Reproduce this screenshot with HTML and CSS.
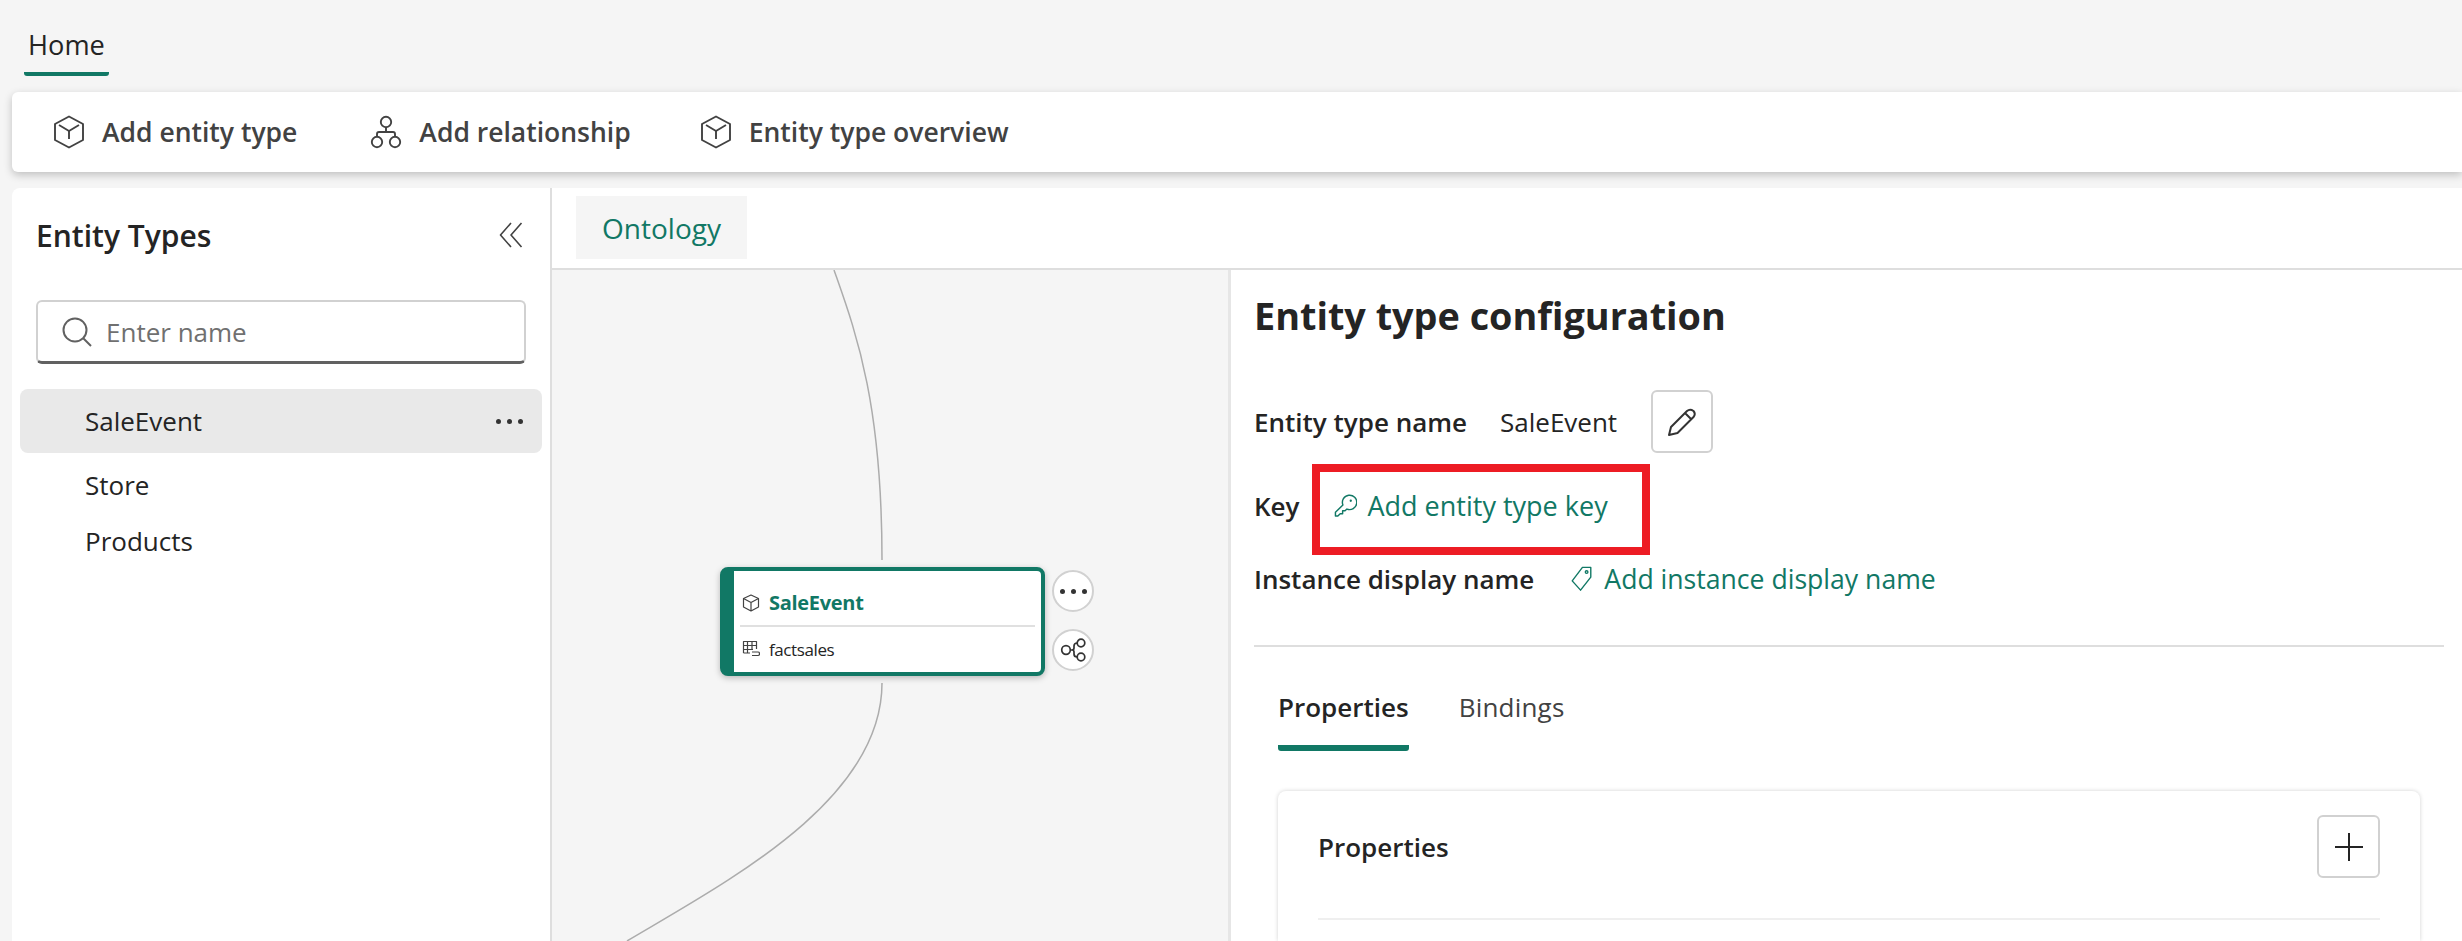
FILE: index.html
```html
<!DOCTYPE html>
<html lang="en">
<head>
<meta charset="utf-8">
<title>Ontology</title>
<link rel="stylesheet" href="styles.css">
</head>
<body>
<header class="top">
  <div class="home-tab">Home</div>
</header>
<nav class="toolbar">
  <button class="tool tool-add">
    <svg class="tool-icon" viewBox="0 0 34 34"><path d="M17 1.500 L31 9 V25 L17 32.500 L3 25 V9 Z M7 10 L17 16 L27 10 M17 16 V24"/></svg>
    <span>Add entity type</span>
  </button>
  <button class="tool tool-rel">
    <svg class="tool-icon" viewBox="0 0 34 34"><circle cx="17" cy="7" r="5.200"/><circle cx="8" cy="27" r="5.200"/><circle cx="26" cy="27" r="5.200"/><path d="M17 12 V17 M8 22 V19 Q8 17 10 17 H24 Q26 17 26 19 V22"/></svg>
    <span>Add relationship</span>
  </button>
  <button class="tool">
    <svg class="tool-icon" viewBox="0 0 34 34"><path d="M17 1.500 L31 9 V25 L17 32.500 L3 25 V9 Z M7 10 L17 16 L27 10 M17 16 V24"/></svg>
    <span>Entity type overview</span>
  </button>
</nav>
<main class="workspace">
  <aside class="side">
    <div class="side-head">
      <h2 class="side-title">Entity Types</h2>
      <svg class="collapse" viewBox="0 0 24 26"><path d="M12 1 L1.500 13 L12 25 M22.500 1 L12 13 L22.500 25"/></svg>
    </div>
    <div class="search">
      <svg class="search-icon" viewBox="0 0 30 30"><circle cx="13" cy="13" r="11.500"/><path d="M21 21 L29 29"/></svg>
      <span class="placeholder">Enter name</span>
    </div>
    <ul class="list">
      <li class="item item-active"><span>SaleEvent</span><span class="dots"><i></i><i></i><i></i></span></li>
      <li class="item item-store">Store</li>
      <li class="item item-products">Products</li>
    </ul>
  </aside>
  <section class="content">
    <div class="tabstrip"><div class="doc-tab">Ontology</div></div>
    <div class="split">
      <div class="canvas">
        <svg class="edges" viewBox="0 0 675 671">
          <path d="M282 0 C 303 60 330 130 330 290"/>
          <path d="M330 413 C 330 530 178 610 75 671"/>
        </svg>
        <div class="node">
          <div class="node-title">
            <svg class="node-icon" viewBox="0 0 18 18"><path d="M9 1 L16.500 4.500 V13 L9 17 L1.500 13 V4.500 Z M2 4.800 L9 8.500 L16 4.800 M9 8.500 V17"/></svg>
            <span>SaleEvent</span>
          </div>
          <div class="node-sub">
            <svg class="node-icon" viewBox="0 0 18 18"><path d="M1.500 13 V1.500 H14.500 V9 M1.500 5.500 H14.500 M1.500 9.500 H11 M5.500 1.500 V13 M10 1.500 V9 M1.500 13 H8 M10 12 H12 M10 15.500 H16.500 M10 12 H16 Q17.500 12 17.500 13.700 Q17.500 15.500 16 15.500"/></svg>
            <span>factsales</span>
          </div>
        </div>
        <div class="node-btn node-btn-more"><span class="dots"><i></i><i></i><i></i></span></div>
        <div class="node-btn node-btn-rel">
          <svg class="rel-icon" viewBox="0 0 26 24"><circle cx="6" cy="12" r="4.300"/><circle cx="21" cy="5" r="3.800"/><circle cx="21" cy="19" r="3.800"/><path d="M10.300 12 H12 Q14 12 14 10 V8 Q14 5 17.200 5 M12 12 Q14 12 14 14 V16 Q14 19 17.200 19"/></svg>
        </div>
      </div>
      <div class="config">
        <h1 class="config-title">Entity type configuration</h1>
        <div class="field field-name">
          <span class="label">Entity type name</span>
          <span class="value">SaleEvent</span>
          <button class="square-btn">
            <svg class="pencil" viewBox="0 0 30 30"><path d="M2 28 L4 20 L20 4 Q23 1.500 26.500 4 Q29 7 26.500 10 L10.500 26 Z M18 6 L24.500 12.500"/></svg>
          </button>
        </div>
        <div class="field field-key">
          <span class="label">Key</span>
          <a class="add-link add-link-key">
            <svg class="link-icon" viewBox="0 0 24 24"><path d="M9.300 11 A7.500 7.500 0 1 1 13.500 15.200 L11.500 17 H9 V20 H6.500 L4 22.500 H1.500 V18.500 Z"/><circle class="key-hole" cx="17.500" cy="6.500" r="1.200"/></svg>
            <span>Add entity type key</span>
          </a>
        </div>
        <div class="field field-instance">
          <span class="label">Instance display name</span>
          <a class="add-link add-link-instance">
            <svg class="link-icon" viewBox="0 0 24 28"><path d="M13 1.500 H22 V12 L11 26 L2 16 Z"/><circle cx="17.500" cy="6.500" r="1.400"/></svg>
            <span>Add instance display name</span>
          </a>
        </div>
        <hr class="rule">
        <div class="subtabs">
          <div class="subtab subtab-active">Properties</div>
          <div class="subtab">Bindings</div>
        </div>
        <div class="card">
          <div class="card-head">
            <span class="label">Properties</span>
            <button class="square-btn">
              <svg class="plus" viewBox="0 0 30 30"><path d="M15 1 V29 M1 15 H29"/></svg>
            </button>
          </div>
          <hr class="card-rule">
        </div>
      </div>
    </div>
  </section>
  <div class="callout"></div>
</main>
</body>
</html>
```
FILE: styles.css
```css
* { box-sizing: border-box; }
html, body { margin: 0; height: 100%; }
body {
  width: 2462px;
  height: 941px;
  overflow: hidden;
  background: #f5f5f5;
  font-family: "Open Sans", "Noto Sans", sans-serif;
  font-size: 26px;
  color: #242424;
  display: flex;
  flex-direction: column;
}
svg { fill: none; stroke: currentColor; stroke-width: 2; stroke-linejoin: round; display: block; flex: none; }
button { font: inherit; color: inherit; background: none; border: 0; padding: 0; }

.top { height: 92px; padding: 24px 0 0 24px; flex: none; }
.home-tab {
  display: inline-block;
  padding: 0 4px;
  height: 52px;
  line-height: 41px;
  font-size: 27.200px;
  font-weight: 500;
  border-bottom: 4px solid #117865;
  border-radius: 0 0 3px 3px;
}

.toolbar {
  height: 80px;
  margin: 0 0 16px 12px;
  background: #fff;
  border-radius: 6px 0 0 6px;
  box-shadow: 0 3px 8px rgba(0,0,0,.22);
  display: flex;
  align-items: center;
  padding-left: 40px;
  flex: none;
}
.tool { display: flex; align-items: center; gap: 16px; font-weight: 600; color: #424242; font-size: 26.500px; }
.tool-add { margin-right: 72px; }
.tool-rel { margin-right: 68px; }
.tool-icon { width: 34px; height: 34px; stroke-width: 1.900; }

.workspace { position: relative; flex: 1; display: flex; margin-left: 12px; min-height: 0; }
.side { width: 540px; flex: none; background: #fff; border-radius: 8px 0 0 0; padding: 0 8px 0 8px; border-right: 2px solid #dedede; }
.side-head { height: 112px; display: flex; align-items: center; justify-content: space-between; padding: 0 19px 18px 16px; }
.side-title { margin: 0; font-size: 30px; font-weight: 600; color: #242424; }
.collapse { width: 24px; height: 26px; color: #424242; stroke-width: 1.600; }
.search {
  height: 64px;
  margin: 0 16px 0 16px;
  border: 2px solid #d1d1d1;
  border-bottom: 3px solid #616161;
  border-radius: 6px;
  display: flex;
  align-items: center;
  gap: 14px;
  padding-left: 24px;
  color: #707070;
}
.search-icon { width: 30px; height: 30px; color: #616161; }
.list { list-style: none; margin: 25px 0 0; padding: 0; }
.item { height: 64px; padding: 0 19px 0 65px; display: flex; align-items: center; justify-content: space-between; }
.item-active { background: #e9e9e9; border-radius: 8px; }
.item-store { height: 56px; margin-top: 4px; }
.item-products { height: 56px; }
.dots { display: flex; gap: 6px; }
.dots i { width: 5px; height: 5px; border-radius: 50%; background: #333; display: block; }

.content { flex: 1; min-width: 0; display: flex; flex-direction: column; }
.tabstrip { height: 82px; background: #fff; border-bottom: 2px solid #dedede; padding: 8px 0 0 24px; flex: none; }
.doc-tab { width: 171px; height: 63px; background: #f5f5f5; color: #117865; font-size: 28px; font-weight: 500; display: flex; align-items: center; justify-content: center; }
.split { flex: 1; display: flex; min-height: 0; }
.canvas { position: relative; width: 676px; flex: none; background: #f5f5f5; }
.edges { position: absolute; inset: 0; width: 675px; height: 671px; color: #acacac; stroke-width: 1.500; }
.node {
  position: absolute;
  left: 168px;
  top: 297px;
  width: 325px;
  height: 109px;
  background: #fff;
  border: 4px solid #117865;
  border-left-width: 14px;
  border-radius: 8px;
  box-shadow: 0 2px 6px rgba(0,0,0,.25);
  padding: 0 6px;
}
.node-title { height: 56px; padding-top: 9px; display: flex; align-items: center; gap: 9px; color: #117865; font-size: 20px; font-weight: 700; letter-spacing: -0.300px; border-bottom: 2px solid #e0e0e0; }
.node-title svg { color: #424242; }
.node-sub { display: flex; align-items: center; gap: 9px; font-size: 17px; height: 44px; letter-spacing: -0.400px; }
.node-icon { width: 18px; height: 18px; stroke-width: 1.200; margin-left: 2px; color: #424242; }
.node-btn { position: absolute; left: 500px; width: 42px; height: 42px; border: 2px solid #d1d1d1; border-radius: 50%; background: #fff; display: flex; align-items: center; justify-content: center; }
.node-btn-more { top: 300px; }
.node-btn-rel { top: 359px; }
.rel-icon { width: 26px; height: 24px; stroke-width: 1.700; color: #333; }

.config { flex: 1; min-width: 0; min-height: 0; background: #fff; border-left: 3px solid #e6e6e6; padding: 21px 18px 0 23px; display: flex; flex-direction: column; overflow: hidden; }
.config-title { margin: 0 0 49px; font-size: 37.800px; line-height: 50px; font-weight: 700; color: #242424; }
.field { display: flex; align-items: center; flex: none; }
.label { font-weight: 600; color: #242424; }
.value { margin-left: 33px; }
.field-name { height: 63px; }
.square-btn { width: 62px; height: 63px; border: 2px solid #d1d1d1; border-radius: 6px; background: #fff; display: flex; align-items: center; justify-content: center; flex: none; }
.field-name .square-btn { margin-left: 34px; }
.card .square-btn { width: 63px; }
.pencil { width: 30px; height: 30px; color: #333; stroke-width: 2; }
.plus { width: 30px; height: 30px; color: #242424; }
.field-key { height: 55px; margin-top: 25px; }
.field-instance { height: 55px; margin-top: 18px; }
.add-link { display: flex; align-items: center; color: #117865; font-size: 27px; }
.add-link-key { margin-left: 34px; gap: 11px; }
.add-link-instance { margin-left: 36px; gap: 11px; font-size: 26.600px; }
.link-icon { width: 23px; height: 26px; stroke-width: 1.500; }
.key-hole { fill: currentColor; stroke: none; }
.rule { margin: 39px 0 0; border: 0; border-top: 2px solid #dedede; flex: none; width: 100%; }
.subtabs { display: flex; gap: 50px; margin: 38px 0 0 24px; height: 66px; flex: none; }
.subtab { line-height: 45px; height: 66px; letter-spacing: 0.200px; color: #424242; }
.subtab-active { font-weight: 600; letter-spacing: 0; color: #242424; border-bottom: 6px solid #117865; border-radius: 3px; }
.card { margin: 40px 24px 0 24px; flex: 1; min-height: 0; background: #fff; border-radius: 8px 8px 0 0; box-shadow: 0 0 4px rgba(0,0,0,.18); padding: 24px 40px 0; }
.card-head { display: flex; align-items: center; justify-content: space-between; }
.card-rule { margin: 40px 0 0; border: 0; border-top: 2px solid #efefef; }

.callout { position: absolute; left: 1300px; top: 276px; width: 338px; height: 91px; border: 8px solid #ed1c24; }
```
